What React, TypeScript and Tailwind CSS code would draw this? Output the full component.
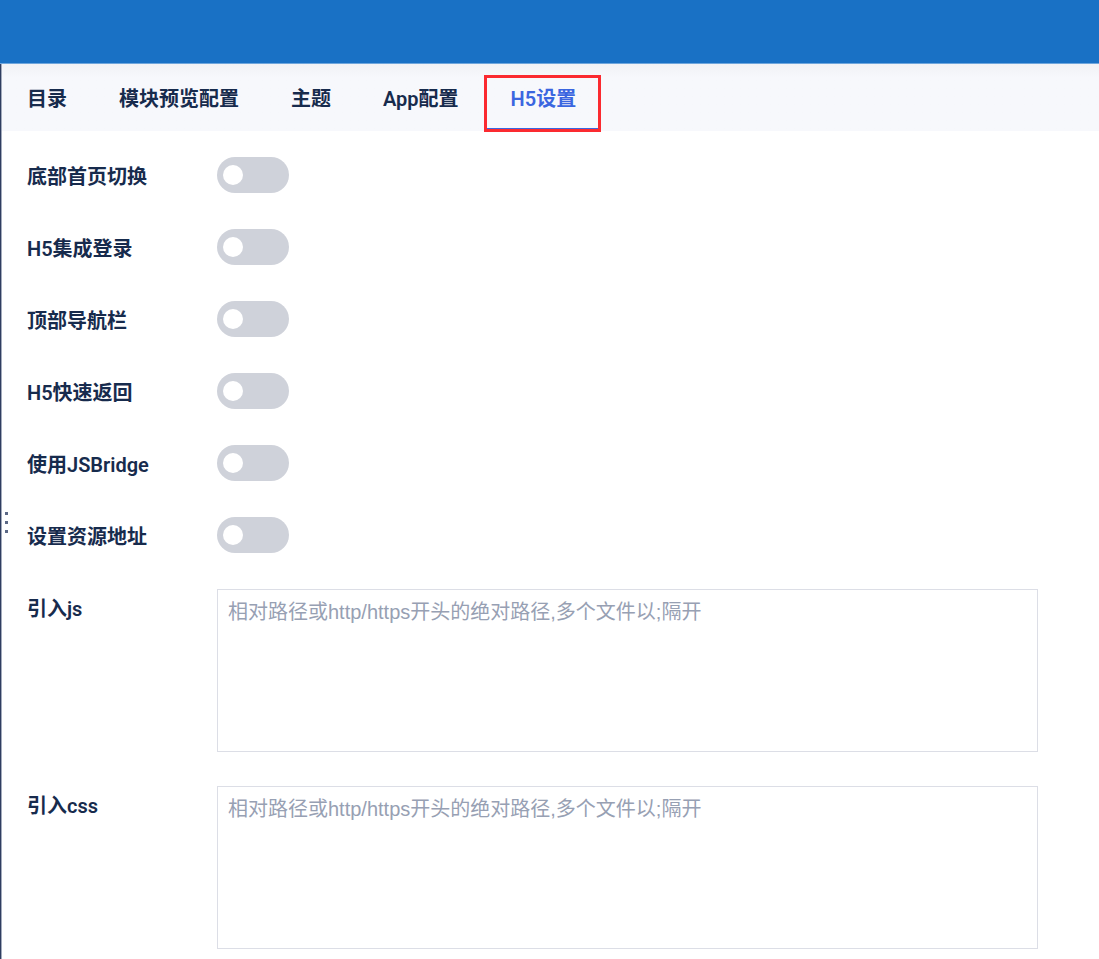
import { useState } from "react";

const tabs = ["目录", "模块预览配置", "主题", "App配置", "H5设置"];

const switches = [
  { id: "home-switch", label: "底部首页切换" },
  { id: "h5-login", label: "H5集成登录" },
  { id: "top-nav", label: "顶部导航栏" },
  { id: "h5-back", label: "H5快速返回" },
  { id: "js-bridge", label: "使用JSBridge" },
  { id: "resource-url", label: "设置资源地址" },
];

const files = [
  { id: "import-js", label: "引入js" },
  { id: "import-css", label: "引入css" },
];

const labelClass =
  "w-[190px] shrink-0 font-['Roboto','Noto_Sans_CJK_SC',sans-serif] text-xl leading-10 font-semibold text-[#172b4d]";

function SwitchRow({ id, label }: { id: string; label: string }) {
  return (
    <div className="flex h-9 items-start">
      <label htmlFor={id} className={labelClass}>
        {label}
      </label>
      <input
        id={id}
        type="checkbox"
        role="switch"
        className="h-9 w-[72px] shrink-0 cursor-pointer appearance-none rounded-full bg-[#cfd2da] px-1.5 py-2 before:block before:size-5 before:rounded-full before:bg-white before:transition-transform checked:bg-[#3b66e0] checked:before:translate-x-10"
      />
    </div>
  );
}

function FileRow({ id, label }: { id: string; label: string }) {
  return (
    <div className="flex items-start">
      <label htmlFor={id} className={labelClass}>
        {label}
      </label>
      <textarea
        id={id}
        placeholder="相对路径或http/https开头的绝对路径,多个文件以;隔开"
        className="h-[163px] min-w-0 flex-1 resize-none border border-[#dcdee6] bg-white px-2.5 py-2 text-xl leading-7 text-[#172b4d] outline-none placeholder:text-[#97a0b3]"
      />
    </div>
  );
}

export default function App() {
  const [active, setActive] = useState("H5设置");

  return (
    <div className="flex min-h-screen flex-col bg-white font-['Liberation_Sans','Noto_Sans_CJK_SC',sans-serif]">
      <header className="h-16 shrink-0 border-b border-[#6fa6dc] bg-[#1971c5]" />
      <main className="relative flex-1 border-l border-[#2f3d60] pl-px shadow-[inset_1px_0_#a3abbc]">
        <nav
          role="tablist"
          className="flex h-[67px] gap-0.5 bg-[#f7f8fc] bg-linear-to-b from-[#f1f2f5] to-[#f7f8fc] to-20%"
        >
          {tabs.map((tab) => {
            const selected = tab === active;
            return (
              <button
                key={tab}
                type="button"
                role="tab"
                aria-selected={selected}
                onClick={() => setActive(tab)}
                className={`relative flex h-full shrink-0 cursor-pointer justify-center border-b-3 px-[25px] pt-[21px] font-['Roboto','Noto_Sans_CJK_SC',sans-serif] text-xl leading-7 font-semibold ${
                  selected ? "border-[#3b66e0] text-[#3b66e0]" : "border-transparent text-[#172b4d]"
                }`}
              >
                {tab}
                {tab === "H5设置" && (
                  <span className="pointer-events-none absolute top-[11px] right-0 -bottom-1 -left-0.5 border-3 border-[#fb2a30]" />
                )}
              </button>
            );
          })}
        </nav>
        <form className="flex flex-col gap-9 pt-[26px] pr-[61px] pb-2 pl-[25px]">
          {switches.map((item) => (
            <SwitchRow key={item.id} {...item} />
          ))}
          <div className="flex flex-col gap-[34px]">
            {files.map((item) => (
              <FileRow key={item.id} {...item} />
            ))}
          </div>
        </form>
        <div className="absolute top-1/2 left-1 flex flex-col gap-1.5">
          <span className="size-[3px] bg-[#5b6885]" />
          <span className="size-[3px] bg-[#5b6885]" />
          <span className="size-[3px] bg-[#5b6885]" />
        </div>
      </main>
    </div>
  );
}
